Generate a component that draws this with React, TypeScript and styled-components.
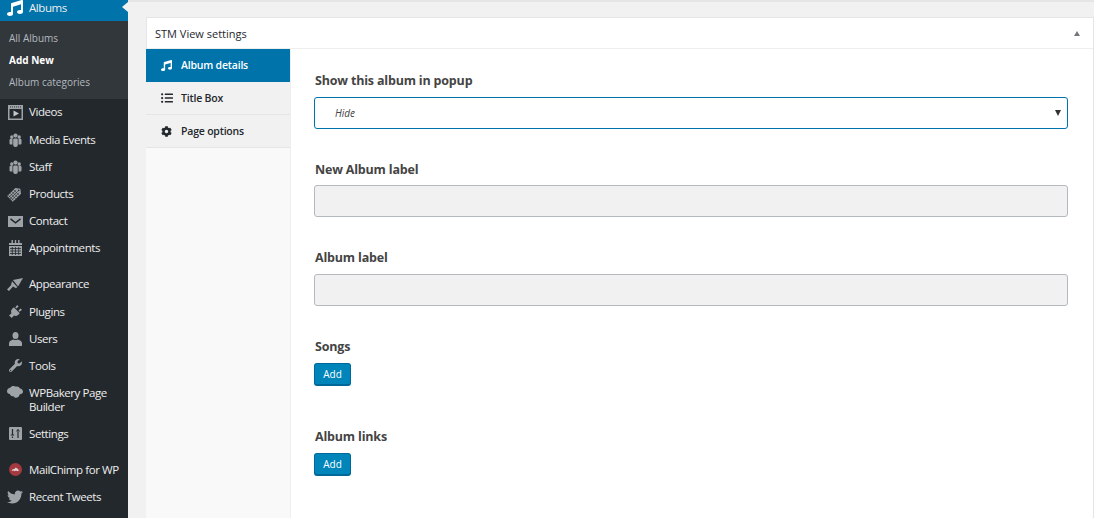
import React from "react";
import styled, { createGlobalStyle } from "styled-components";
import { FaMusic, FaWrench, FaTwitter, FaListUl, FaCog } from "react-icons/fa";

const GlobalStyle = createGlobalStyle`
  html, body {
    margin: 0;
    padding: 0;
    height: 100%;
    overflow: hidden;
    background: #f1f1f1;
  }
  body {
    font-family: "Open Sans", "Noto Sans", sans-serif;
    color: #32373c;
  }
`;

const Page = styled.div`
  display: flex;
  width: 1094px;
  height: 518px;
  overflow: hidden;
`;

const Sidebar = styled.nav`
  width: 128px;
  flex: none;
  background: #23282d;
  overflow: hidden;
  font-size: 11.5px;
  letter-spacing: -0.42px;
`;

const SidebarInner = styled.div`
  margin-top: -6px;
`;

const MenuItem = styled.div<{ $active?: boolean; $tall?: boolean; $gapAfter?: number }>`
  position: relative;
  display: flex;
  align-items: ${({ $tall }) => ($tall ? "flex-start" : "center")};
  box-sizing: border-box;
  min-height: ${({ $active }) => ($active ? "27px" : "27.2px")};
  padding: ${({ $tall }) => ($tall ? "6.5px 0 6px" : "0")};
  margin-bottom: ${({ $gapAfter }) => $gapAfter ?? 0}px;
  background: ${({ $active }) => ($active ? "#0073aa" : "transparent")};
  color: #eee;
  line-height: 14px;
`;

const IconSlot = styled.span<{ $color?: string }>`
  width: 29px;
  flex: none;
  display: flex;
  align-items: center;
  justify-content: center;
  padding-left: 1px;
  box-sizing: border-box;
  color: ${({ $color }) => $color ?? "#9ea3a8"};
`;

const ActiveArrow = styled.span`
  position: absolute;
  right: 0;
  top: 8px;
  width: 0;
  height: 0;
  border-top: 5.5px solid transparent;
  border-bottom: 5.5px solid transparent;
  border-right: 6px solid #f1f1f1;
`;

const SubMenu = styled.div`
  background: #32373c;
  padding: 6px 0;
  height: 77.8px;
  box-sizing: border-box;
  font-size: 10px;
  letter-spacing: 0;
`;

const SubItem = styled.div<{ $current?: boolean }>`
  height: 22px;
  line-height: 22px;
  padding-left: 9px;
  color: ${({ $current }) => ($current ? "#fff" : "#b4b9be")};
  font-weight: ${({ $current }) => ($current ? 700 : 400)};
`;

const Main = styled.main`
  flex: 1;
  min-width: 0;
  display: flex;
  flex-direction: column;
  padding: 17px 0 0 18px;
  position: relative;
`;

const TopRule = styled.div`
  position: absolute;
  left: 0;
  right: 0;
  top: 0;
  height: 2px;
  background: #e5e5e5;
`;

const Panel = styled.section`
  flex: 1;
  display: flex;
  flex-direction: column;
  background: #fff;
  border: 1px solid #e5e5e5;
  border-bottom: 0;
`;

const PanelHeader = styled.header`
  height: 30px;
  flex: none;
  display: flex;
  align-items: center;
  justify-content: space-between;
  padding: 0 13px 0 8px;
  border-bottom: 1px solid #eee;
  font-size: 11px;
  color: #23282d;
`;

const Collapse = styled.span`
  width: 0;
  height: 0;
  border-left: 3.5px solid transparent;
  border-right: 3.5px solid transparent;
  border-bottom: 5px solid #72777c;
`;

const PanelBody = styled.div`
  flex: 1;
  display: flex;
  min-height: 0;
`;

const Tabs = styled.div`
  width: 144px;
  flex: none;
  margin-left: -1px;
  background: #f9f9f9;
  border-right: 1px solid #eee;
`;

const Tab = styled.div<{ $active?: boolean }>`
  display: flex;
  align-items: center;
  box-sizing: border-box;
  height: 33px;
  padding-left: 14px;
  gap: 8px;
  font-size: 10.5px;
  font-weight: 600;
  letter-spacing: -0.2px;
  background: ${({ $active }) => ($active ? "#0073aa" : "#f1f1f1")};
  color: ${({ $active }) => ($active ? "#fff" : "#23282d")};
  border-bottom: 1px solid ${({ $active }) => ($active ? "#0073aa" : "#e5e5e5")};
`;

const TabIcon = styled.span`
  width: 13px;
  display: flex;
  justify-content: center;
`;

const Form = styled.div`
  flex: 1;
  min-width: 0;
  padding: 23px 25px 0 23px;
`;

const Field = styled.div<{ $gap: number }>`
  margin-bottom: ${({ $gap }) => $gap}px;
`;

const Label = styled.div<{ $tight?: boolean }>`
  font-size: 12.5px;
  font-weight: 700;
  line-height: 17px;
  letter-spacing: -0.18px;
  color: #444;
  margin-bottom: ${({ $tight }) => ($tight ? 7 : 8)}px;
  padding-left: 1px;
`;

const SelectBox = styled.div`
  box-sizing: border-box;
  height: 32px;
  display: flex;
  align-items: center;
  justify-content: space-between;
  padding: 0 6px 0 20px;
  border: 1px solid #0073aa;
  border-radius: 3px;
  font-size: 10px;
  font-style: italic;
  color: #444;
`;

const Caret = styled.span`
  width: 0;
  height: 0;
  border-left: 3px solid transparent;
  border-right: 3px solid transparent;
  border-top: 6px solid #333;
`;

const TextInput = styled.div`
  box-sizing: border-box;
  height: 32px;
  background: #f1f1f1;
  border: 1px solid #b4b9be;
  border-radius: 3px;
`;

const AddButton = styled.button`
  display: block;
  box-sizing: border-box;
  width: 37px;
  height: 23px;
  padding: 0;
  background: #0085ba;
  border: 1px solid #006799;
  border-bottom-width: 2px;
  border-radius: 3px;
  color: #fff;
  font-family: inherit;
  font-size: 10px;
`;

const VideoIcon = () => (
  <svg width="15" height="15" viewBox="0 0 15 15">
    <rect width="15" height="15" fill="#9ea3a8" />
    <rect x="1.500" y="4" width="12" height="9.500" fill="#23282d" />
    <path d="M2.500 1v1.800M4.500 1v1.800M6.500 1v1.800M8.500 1v1.800M10.500 1v1.800M12.500 1v1.800" stroke="#5f656a" />
    <path d="M5.500 5.500l5.500 3-5.500 3z" fill="#c3c6c9" />
  </svg>
);

const GroupIcon = () => (
  <svg width="13" height="14" viewBox="0 0 13 14" fill="currentColor">
    <circle cx="2.800" cy="4" r="1.700" />
    <circle cx="6.500" cy="2.600" r="2.100" />
    <circle cx="10.200" cy="4" r="1.700" />
    <path d="M.5 7a1.500 1.500 0 0 1 1.500-1.500h1.500v6H1.500a1 1 0 0 1-1-1z" />
    <path d="M12.500 7A1.500 1.500 0 0 0 11 5.500H9.500v6h2a1 1 0 0 0 1-1z" />
    <path d="M4.200 6.500a1 1 0 0 1 1-1h2.600a1 1 0 0 1 1 1V12a2 2 0 0 1-2 2h-.6a2 2 0 0 1-2-2z" />
  </svg>
);

const ProductIcon = () => (
  <svg width="16" height="16" viewBox="0 0 16 16">
    <g transform="rotate(45 8 8)">
      <path d="M4 3.500L8 .5l4 3V15H4z" fill="currentColor" />
      <path d="M4 6h8M4 8.500h8M4 11h8M4 13.500h8M6 4v11M8 4v11M10 4v11" stroke="#23282d" strokeWidth=".6" />
      <circle cx="8" cy="2.800" r=".8" fill="#23282d" />
    </g>
  </svg>
);

const MailIcon = () => (
  <svg width="15" height="11" viewBox="0 0 15 11">
    <rect width="15" height="11" fill="currentColor" />
    <path d="M2.500 2.800l5 4 5-4" stroke="#23282d" strokeWidth="1.500" fill="none" />
  </svg>
);

const CalendarIcon = () => (
  <svg width="13" height="16" viewBox="0 0 13 16">
    <path d="M0 3h13v13H0z" fill="currentColor" />
    <path d="M2.500 0h1.400v4H2.500zM5.800 0h1.400v4H5.800zM9.100 0h1.400v4H9.100z" fill="currentColor" />
    <path d="M0 5.500h13" stroke="#23282d" />
    <path d="M1 8.500h11M1 11h11M1 13.500h11M3.300 7v8M6.500 7v8M9.700 7v8" stroke="#23282d" strokeWidth=".8" />
  </svg>
);

const BrushIcon = () => (
  <svg width="16" height="14" viewBox="0 0 16 14" fill="currentColor">
    <path d="M6 3L16 1l-5 8.500z" />
    <path d="M5 4.300l5.300 5.800-1.300 1.200-3-1.800L2 14 0 12.500l4-4.300z" />
  </svg>
);

const PlugIcon = () => (
  <svg width="13" height="13" viewBox="0 0 13 13" fill="currentColor">
    <path d="M4.800 2.200l6 6-1.500 1.500c-1.300 1.300-3 1.500-4.300.8L2.800 13 0 10.500l2.500-2.300c-.8-1.300-.5-3 .8-4.400z" />
    <path d="M6.200 2.400L8.200 0l1.400 1.400L7.500 3.600zM9.400 5.500L11.600 3.400 13 4.800l-2.300 2z" />
  </svg>
);

const UserIcon = () => (
  <svg width="13" height="14" viewBox="0 0 13 14" fill="currentColor">
    <ellipse cx="6.500" cy="3.500" rx="3" ry="3.500" />
    <path d="M0 11.500C0 9 2.500 7.800 4.600 7.500c1.200.7 2.600.7 3.800 0C10.500 7.800 13 9 13 11.500V14H0z" />
  </svg>
);

const CloudIcon = () => (
  <svg width="16" height="12" viewBox="0 0 16 12" fill="currentColor">
    <path d="M3.500 1.500C5-.3 7.500-.4 9 .8c2-.7 3.200.5 3.600 1.500C14.800 2.700 16 4 16 5.500c0 1.800-1.600 2.800-3.200 2.700-.4 1.800-1.700 3.500-3.800 3.500-1.400 0-2.100-.8-2.700-1.800-.6.4-2 .4-2.600-.3-.5-.5-.7-1-.7-1.500C1 7.800 0 6.700 0 5.200 0 3.200 1.800 1.800 3.500 1.500z" />
  </svg>
);

const SettingsIcon = () => (
  <svg width="13" height="13" viewBox="0 0 13 13">
    <rect width="13" height="13" rx="1" fill="currentColor" />
    <path d="M3.500 2v5.500M1.800 8h3.400M3.500 9.500V11M9 2v1.500M7.300 4h3.400M9 5v6" stroke="#23282d" strokeWidth="1.200" fill="none" />
  </svg>
);

const MailChimpIcon = () => (
  <svg width="13" height="13" viewBox="0 0 13 13">
    <circle cx="6.500" cy="6.500" r="6.500" fill="#a4393f" />
    <path d="M2.500 8l1.400-2 1.200.3L6.800 4.500l1.800 1.200L10.700 8 9.300 7.500l-.8.700-1.500-.7-1.400.7-1-.6z" fill="#e6d5d5" />
  </svg>
);

const tabs = [
  { label: "Album details", icon: <FaMusic size={11} />, active: true },
  { label: "Title Box", icon: <FaListUl size={12} /> },
  { label: "Page options", icon: <FaCog size={11} /> },
];

const menuAfter = [
  { label: "Videos", icon: <VideoIcon /> },
  { label: "Media Events", icon: <GroupIcon /> },
  { label: "Staff", icon: <GroupIcon /> },
  { label: "Products", icon: <ProductIcon /> },
  { label: "Contact", icon: <MailIcon /> },
  { label: "Appointments", icon: <CalendarIcon />, gap: 8.8 },
  { label: "Appearance", icon: <BrushIcon /> },
  { label: "Plugins", icon: <PlugIcon /> },
  { label: "Users", icon: <UserIcon /> },
  { label: "Tools", icon: <FaWrench size={13} /> },
  { label: "WPBakery Page Builder", icon: <CloudIcon />, tall: true },
  { label: "Settings", icon: <SettingsIcon />, gap: 9 },
  { label: "MailChimp for WP", icon: <MailChimpIcon /> },
  { label: "Recent Tweets", icon: <FaTwitter size={16} /> },
];

const App: React.FC = () => (
  <Page>
    <GlobalStyle />
    <Sidebar>
      <SidebarInner>
        <MenuItem $active>
          <IconSlot $color="#fff">
            <FaMusic size={16} />
          </IconSlot>
          Albums
          <ActiveArrow />
        </MenuItem>
        <SubMenu>
          <SubItem>All Albums</SubItem>
          <SubItem $current>Add New</SubItem>
          <SubItem>Album categories</SubItem>
        </SubMenu>
        {menuAfter.map((item) => (
          <MenuItem key={item.label} $tall={item.tall} $gapAfter={item.gap}>
            <IconSlot>{item.icon}</IconSlot>
            <span>{item.label}</span>
          </MenuItem>
        ))}
      </SidebarInner>
    </Sidebar>
    <Main>
      <TopRule />
      <Panel>
        <PanelHeader>
          STM View settings
          <Collapse />
        </PanelHeader>
        <PanelBody>
          <Tabs>
            {tabs.map((tab) => (
              <Tab key={tab.label} $active={tab.active}>
                <TabIcon>{tab.icon}</TabIcon>
                {tab.label}
              </Tab>
            ))}
          </Tabs>
          <Form>
            <Field $gap={32}>
              <Label>Show this album in popup</Label>
              <SelectBox>
                Hide
                <Caret />
              </SelectBox>
            </Field>
            <Field $gap={32}>
              <Label $tight>New Album label</Label>
              <TextInput />
            </Field>
            <Field $gap={32}>
              <Label>Album label</Label>
              <TextInput />
            </Field>
            <Field $gap={42}>
              <Label>Songs</Label>
              <AddButton>Add</AddButton>
            </Field>
            <Field $gap={0}>
              <Label>Album links</Label>
              <AddButton>Add</AddButton>
            </Field>
          </Form>
        </PanelBody>
      </Panel>
    </Main>
  </Page>
);

export default App;
